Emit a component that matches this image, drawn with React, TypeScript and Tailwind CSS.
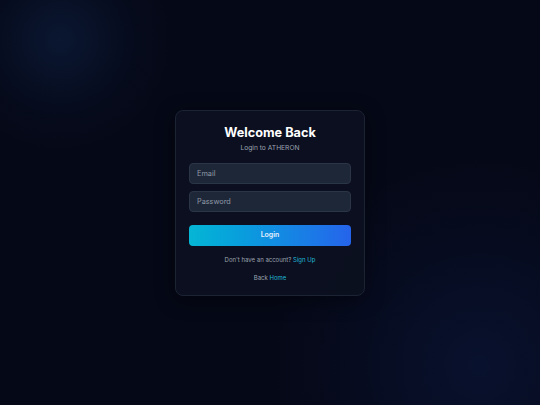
import React from 'react';

const App: React.FC = () => {
  return (
    <div className="relative flex h-[405px] w-[540px] items-center justify-center overflow-hidden bg-[#050816] font-['Inter',sans-serif]">
      {/* background glows */}
      <div className="pointer-events-none absolute left-[-60px] top-[-80px] h-[240px] w-[240px] rounded-full bg-[radial-gradient(circle,rgba(20,50,100,0.35)_0%,rgba(10,25,60,0.15)_45%,transparent_70%)]" />
      <div className="pointer-events-none absolute bottom-[-180px] right-[-160px] h-[440px] w-[440px] rounded-full bg-[radial-gradient(circle,rgba(15,35,90,0.35)_0%,rgba(10,25,70,0.15)_45%,transparent_70%)]" />

      <div className="relative w-[190px] rounded-[8px] border border-[#1c2333] bg-[#0c1120]/90 px-[13px] pb-[12px] pt-[13px] shadow-[0_4px_20px_rgba(0,0,0,0.4)]">
        <h1 className="text-center text-[12.7px] font-bold leading-[18px] text-white">Welcome Back</h1>
        <p className="mt-[1px] text-center text-[6.7px] leading-[10px] text-[#9ca3af]">Login to ATHERON</p>

        <div className="mt-[10px] flex flex-col gap-[7px]">
          <input
            placeholder="Email"
            className="h-[21px] w-full rounded-[4px] border border-[#2a3546] bg-[#1e2737] px-[7px] text-[7.3px] text-white placeholder-[#8f99a8] outline-none"
          />
          <input
            type="password"
            placeholder="Password"
            className="h-[21px] w-full rounded-[4px] border border-[#2a3546] bg-[#1e2737] px-[7px] text-[7.3px] text-white placeholder-[#8f99a8] outline-none"
          />
        </div>

        <button className="mt-[13px] h-[21px] w-full rounded-[4px] bg-gradient-to-r from-[#06b6d4] to-[#2563eb] text-[7px] font-semibold text-[#e5f0ff]">
          Login
        </button>

        <p className="mt-[9px] text-center text-[6px] leading-[10px] text-[#9ca3af]">
          Don't have an account? <span className="text-[#22b8d6]">Sign Up</span>
        </p>
        <p className="mt-[8px] text-center text-[6px] leading-[10px] text-[#9ca3af]">
          Back <span className="text-[#22b8d6]">Home</span>
        </p>
      </div>
    </div>
  );
};

export default App;
